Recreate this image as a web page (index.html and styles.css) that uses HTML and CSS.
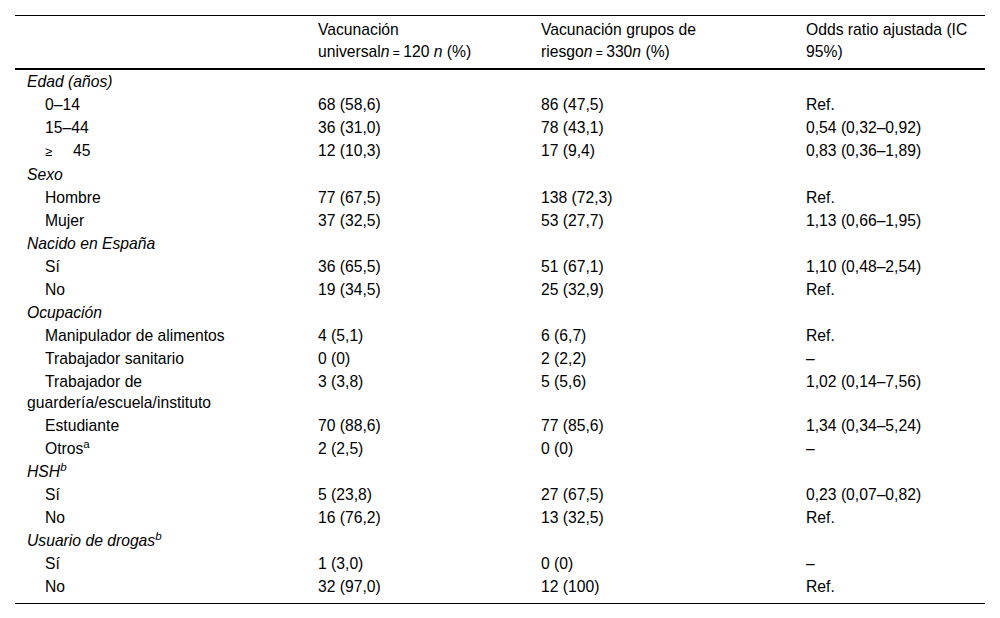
FILE: index.html
```html
<!DOCTYPE html>
<html lang="es">
<head>
<meta charset="utf-8">
<link rel="stylesheet" href="styles.css">
</head>
<body>
<div class="wrap">
<table class="tbl">
<colgroup>
<col class="c1"><col class="c2"><col class="c3"><col class="c4">
</colgroup>
<thead>
<tr>
<th></th>
<th>Vacunación<br>universal<i>n</i><span class="eq"> = </span>120 <i>n</i> (%)</th>
<th>Vacunación grupos de<br>riesgo<i>n</i><span class="eq"> = </span>330<i>n</i> (%)</th>
<th>Odds ratio ajustada (IC<br>95%)</th>
</tr>
</thead>
<tbody>
<tr><td class="cat">Edad (años)</td><td></td><td></td><td></td></tr>
<tr><td class="sub">0–14</td><td>68 (58,6)</td><td>86 (47,5)</td><td>Ref.</td></tr>
<tr><td class="sub">15–44</td><td>36 (31,0)</td><td>78 (43,1)</td><td>0,54 (0,32–0,92)</td></tr>
<tr><td class="sub"><span class="ge">≥</span>45</td><td>12 (10,3)</td><td>17 (9,4)</td><td>0,83 (0,36–1,89)</td></tr>
<tr><td class="cat">Sexo</td><td></td><td></td><td></td></tr>
<tr><td class="sub">Hombre</td><td>77 (67,5)</td><td>138 (72,3)</td><td>Ref.</td></tr>
<tr><td class="sub">Mujer</td><td>37 (32,5)</td><td>53 (27,7)</td><td>1,13 (0,66–1,95)</td></tr>
<tr><td class="cat">Nacido en España</td><td></td><td></td><td></td></tr>
<tr><td class="sub">Sí</td><td>36 (65,5)</td><td>51 (67,1)</td><td>1,10 (0,48–2,54)</td></tr>
<tr><td class="sub">No</td><td>19 (34,5)</td><td>25 (32,9)</td><td>Ref.</td></tr>
<tr><td class="cat">Ocupación</td><td></td><td></td><td></td></tr>
<tr><td class="sub">Manipulador de alimentos</td><td>4 (5,1)</td><td>6 (6,7)</td><td>Ref.</td></tr>
<tr><td class="sub">Trabajador sanitario</td><td>0 (0)</td><td>2 (2,2)</td><td>–</td></tr>
<tr><td class="sub">Trabajador de<br>guardería/escuela/instituto</td><td>3 (3,8)</td><td>5 (5,6)</td><td>1,02 (0,14–7,56)</td></tr>
<tr><td class="sub">Estudiante</td><td>70 (88,6)</td><td>77 (85,6)</td><td>1,34 (0,34–5,24)</td></tr>
<tr><td class="sub">Otros<sup>a</sup></td><td>2 (2,5)</td><td>0 (0)</td><td>–</td></tr>
<tr><td class="cat">HSH<sup>b</sup></td><td></td><td></td><td></td></tr>
<tr><td class="sub">Sí</td><td>5 (23,8)</td><td>27 (67,5)</td><td>0,23 (0,07–0,82)</td></tr>
<tr><td class="sub">No</td><td>16 (76,2)</td><td>13 (32,5)</td><td>Ref.</td></tr>
<tr><td class="cat">Usuario de drogas<sup>b</sup></td><td></td><td></td><td></td></tr>
<tr><td class="sub">Sí</td><td>1 (3,0)</td><td>0 (0)</td><td>–</td></tr>
<tr class="last"><td class="sub">No</td><td>32 (97,0)</td><td>12 (100)</td><td>Ref.</td></tr>
</tbody>
</table>
</div>
</body>
</html>
```
FILE: styles.css
```css
html, body {
  margin: 0;
  padding: 0;
  background: #fff;
}
.wrap {
  padding: 15px;
}
.tbl {
  width: 970px;
  border-collapse: collapse;
  table-layout: fixed;
  font-family: "Liberation Sans", Arial, sans-serif;
  font-size: 15.7px;
  color: #000;
  border-top: 1px solid #000;
  border-bottom: 1px solid #000;
}
.c1 { width: 291px; }
.c2 { width: 223px; }
.c3 { width: 265px; }
.c4 { width: 191px; }
.tbl th {
  font-weight: normal;
  text-align: left;
  vertical-align: top;
  line-height: 22px;
  padding: 3px 6px 4px 12px;
  border-bottom: 2px solid #000;
}
.tbl td {
  text-align: left;
  vertical-align: top;
  line-height: 21px;
  padding: 1px 12px;
}
.tbl .last td {
  padding-bottom: 6px;
}
.tbl .cat {
  font-style: italic;
}
.tbl .sub {
  text-indent: 18px;
}
.eq {
  font-size: 12px;
}
.ge {
  font-size: 13px;
  display: inline-block;
  width: 28px;
  text-indent: 0;
}
sup {
  font-size: 11.5px;
  line-height: 0;
  vertical-align: 6px;
}
```
